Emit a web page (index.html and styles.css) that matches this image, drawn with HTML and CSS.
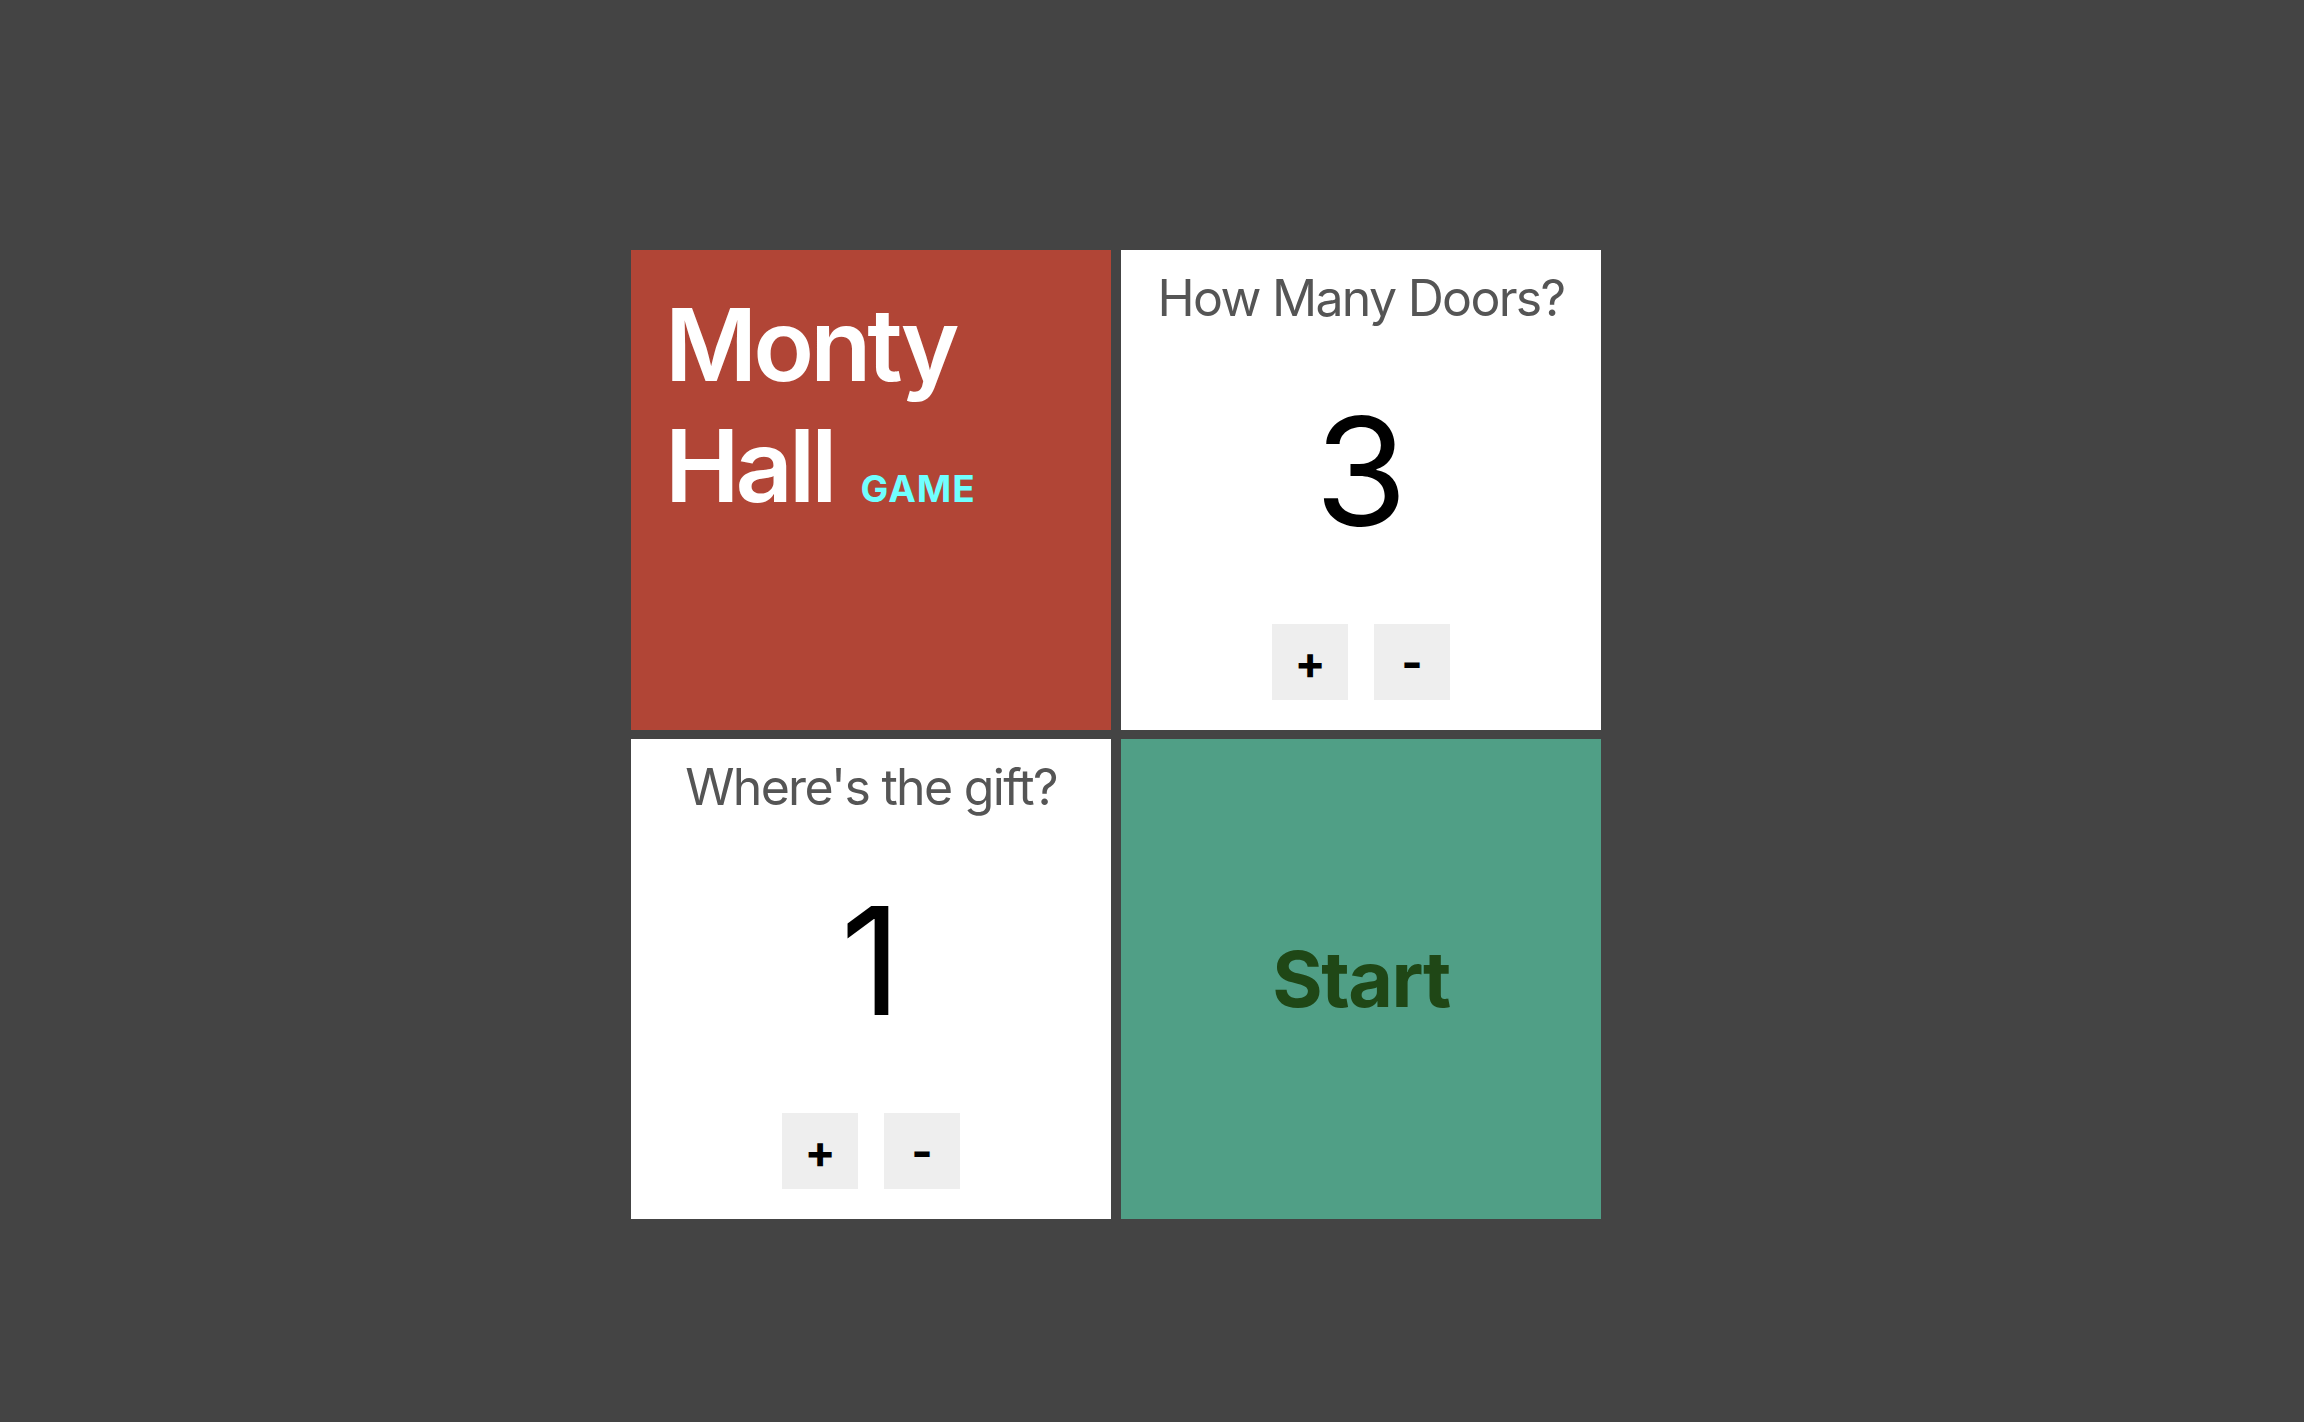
FILE: index.html
```html
<!DOCTYPE html>
<html lang="en">
<head>
<meta charset="utf-8">
<title>Monty Hall Game</title>
<link rel="stylesheet" href="styles.css">
</head>
<body>
<main class="board">
  <section class="tile tile-brand">
    <h1 class="brand">Monty<br>Hall <span class="brand-sub">GAME</span></h1>
  </section>
  <section class="tile tile-counter">
    <h2 class="counter-title">How Many Doors?</h2>
    <div class="counter-value">3</div>
    <div class="counter-buttons">
      <button class="counter-btn">+</button>
      <button class="counter-btn">-</button>
    </div>
  </section>
  <section class="tile tile-counter">
    <h2 class="counter-title">Where's the gift?</h2>
    <div class="counter-value">1</div>
    <div class="counter-buttons">
      <button class="counter-btn">+</button>
      <button class="counter-btn">-</button>
    </div>
  </section>
  <section class="tile tile-start">
    <button class="start-btn">Start</button>
  </section>
</main>
</body>
</html>
```
FILE: styles.css
```css
html, body {
  margin: 0;
  padding: 0;
}
body {
  background: #444444;
  min-height: 1422px;
  font-family: Inter, "Noto Sans", sans-serif;
  padding: 250px 0 0 631px;
  box-sizing: border-box;
}
.board {
  display: grid;
  grid-template-columns: 480px 480px;
  grid-template-rows: 480px 480px;
  column-gap: 10px;
  row-gap: 9px;
}
.tile {
  box-sizing: border-box;
  width: 480px;
  height: 480px;
}
.tile-brand {
  background: #b14536;
  padding: 34px 0 0 34px;
}
.brand {
  margin: 0;
  color: #ffffff;
  font-size: 100px;
  line-height: 121px;
  font-weight: 600;
  letter-spacing: -4px;
}
.brand-sub {
  color: #70ffff;
  font-size: 37px;
  font-weight: 700;
  letter-spacing: 1px;
  margin-left: 6px;
}
.tile-counter {
  background: #ffffff;
  display: flex;
  flex-direction: column;
  align-items: center;
  padding: 18px 0 30px;
}
.counter-title {
  margin: 0;
  font-size: 50px;
  font-weight: 400;
  color: #555555;
  line-height: 60px;
  letter-spacing: -1.7px;
}
.counter-value {
  margin-top: 53px;
  font-size: 150px;
  line-height: 182px;
  color: #000000;
}
.counter-buttons {
  margin-top: auto;
  display: flex;
  gap: 26px;
}
.counter-btn {
  width: 76px;
  height: 76px;
  border: none;
  background: #eeeeee;
  font-family: Inter, "Noto Sans", sans-serif;
  font-size: 46px;
  font-weight: 700;
  color: #000000;
  padding: 0;
  display: flex;
  align-items: center;
  justify-content: center;
}
.tile-start {
  background: #509f86;
  display: flex;
  align-items: center;
  justify-content: center;
}
.start-btn {
  border: none;
  background: transparent;
  font-family: Inter, "Noto Sans", sans-serif;
  font-size: 77px;
  font-weight: 700;
  color: #1f4716;
  padding: 0;
  letter-spacing: -1.5px;
}
```
